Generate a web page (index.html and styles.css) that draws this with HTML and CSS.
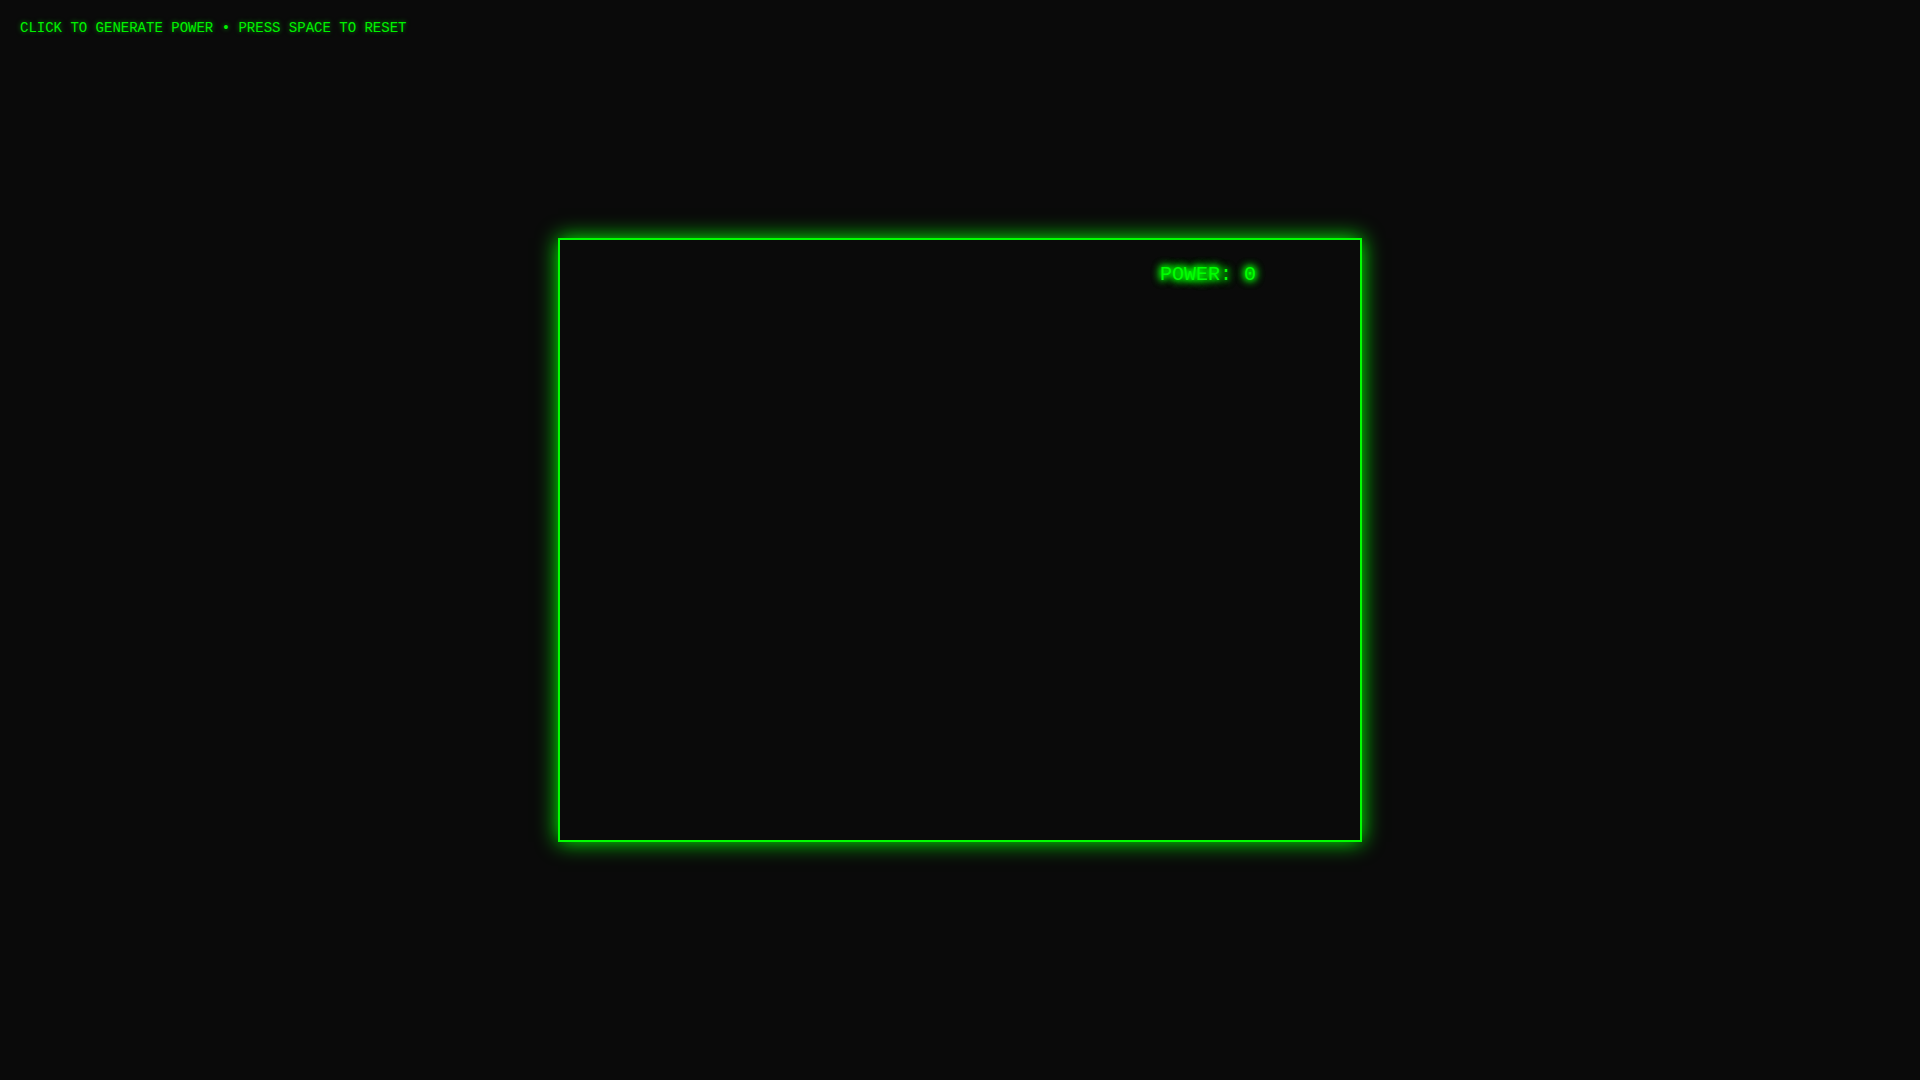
FILE: index.html
```html
<!DOCTYPE html>
<html>
<head>
<meta charset="utf-8">
<link rel="stylesheet" href="styles.css">
</head>
<body>
<div class="hint">CLICK TO GENERATE POWER • PRESS SPACE TO RESET</div>
<main class="stage">
  <div class="screen">
    <div class="power">POWER: 0</div>
  </div>
</main>
</body>
</html>
```
FILE: styles.css
```css
html, body {
  margin: 0;
  padding: 0;
  width: 100%;
  height: 100%;
  background: #0a0a0a;
  overflow: hidden;
  font-family: "Liberation Mono", "DejaVu Sans Mono", monospace;
}
.hint {
  position: absolute;
  left: 20px;
  top: 19px;
  font-size: 14px;
  line-height: 18px;
  color: #00ff00;
  opacity: 0.95;
  text-shadow: 0 0 5px rgba(0, 255, 0, 0.6);
  letter-spacing: 0;
}
.stage {
  width: 100%;
  height: 100%;
  display: flex;
  align-items: center;
  justify-content: center;
}
.screen {
  position: relative;
  width: 800px;
  height: 600px;
  border: 2px solid #00ff00;
  background: #0a0a0a;
  box-shadow: 0 0 20px #00ff00;
}
.power {
  position: absolute;
  left: 600px;
  top: 23px;
  font-size: 20px;
  line-height: 24px;
  color: #00ff00;
  text-shadow: 0 0 10px #00ff00, 0 0 10px #00ff00, 0 0 10px #00ff00, 0 0 5px #00ff00;
}
```
